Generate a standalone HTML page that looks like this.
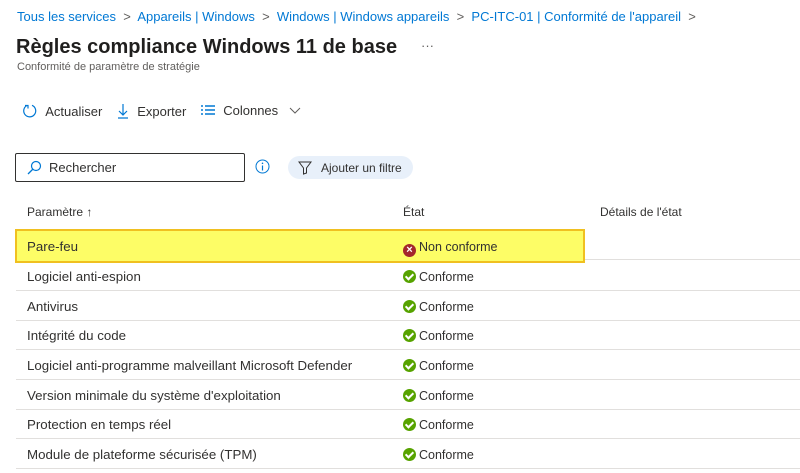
<!DOCTYPE html>
<html><head><meta charset="utf-8"><style>
*{margin:0;padding:0;box-sizing:border-box}
body{width:800px;height:473px;overflow:hidden;background:#fff;font-family:"Liberation Sans",sans-serif;color:#323130;position:relative}
.a{position:absolute;white-space:nowrap}
.bc{top:9px;font-size:13px;color:#0078d4}
.sep{color:#605e5c}
.row{position:absolute;left:16px;width:784px;height:30px;border-bottom:1px solid #e1dfdd}
.row .p{position:absolute;left:11px;top:8px;font-size:13.3px}
.row .s{position:absolute;left:387px;top:9px;font-size:12.5px}
.ok{display:inline-block;width:13px;height:13px;border-radius:50%;background:#57a300;vertical-align:-2px;margin-right:3px;position:relative}
.ok:after{content:"";position:absolute;left:4px;top:2px;width:3px;height:6px;border:solid #fff;border-width:0 2px 2px 0;transform:rotate(45deg)}
.ko{display:inline-block;width:13px;height:13px;border-radius:50%;background:#a4262c;vertical-align:-2px;margin-right:3px;color:#fff;font-size:11px;line-height:13px;text-align:center;font-weight:bold}
</style></head><body>
<div class="a bc" style="left:17px">Tous les services <span class="sep">&nbsp;&gt;&nbsp;</span> Appareils | Windows <span class="sep">&nbsp;&gt;&nbsp;</span> Windows | Windows appareils <span class="sep">&nbsp;&gt;&nbsp;</span> PC-ITC-01 | Conformité de l'appareil <span class="sep">&nbsp;&gt;</span></div>
<div class="a" style="left:16px;top:36px;font-size:20px;font-weight:bold;color:#201f1e">Règles compliance Windows 11 de base</div>
<div class="a" style="left:421px;top:38px;font-size:13px;color:#605e5c">···</div>
<div class="a" style="left:17px;top:61px;font-size:11px;color:#605e5c">Conformité de paramètre de stratégie</div>
<div class="a" style="left:22px;top:103px;font-size:13px">
<svg width="16" height="16" viewBox="0 0 16 16" style="vertical-align:-3px"><path d="M5 2.5A6 6 0 1 0 10 2.3" fill="none" stroke="#0078d4" stroke-width="1.2"/><path d="M3 2.5h3v3" fill="none" stroke="#0078d4" stroke-width="1.2"/></svg>&nbsp;&nbsp;Actualiser</div>
<div class="a" style="left:116px;top:103px;font-size:13px">
<svg width="14" height="16" viewBox="0 0 14 16" style="vertical-align:-3px"><path d="M7 1v11M3 8l4 4 4-4M2 15h10" fill="none" stroke="#0078d4" stroke-width="1.2"/></svg>&nbsp;&nbsp;Exporter</div>
<div class="a" style="left:200px;top:103px;font-size:13px">
<svg width="16" height="14" viewBox="0 0 16 14" style="vertical-align:-2px"><path d="M1 3h2M5 3h10M1 7h2M5 7h10M1 11h2M5 11h10" stroke="#0078d4" stroke-width="1.5"/></svg>&nbsp;&nbsp;Colonnes&nbsp;&nbsp;
<svg width="12" height="8" viewBox="0 0 12 8"><path d="M1 1l5 5 5-5" fill="none" stroke="#605e5c"/></svg></div>
<div class="a" style="left:15px;top:153px;width:230px;height:29px;border:1px solid #323130;border-radius:2px;font-size:13px;padding:6px 0 0 33px">Rechercher
<svg width="16" height="16" viewBox="0 0 16 16" style="position:absolute;left:10px;top:6px"><circle cx="10" cy="6" r="4.5" fill="none" stroke="#0078d4" stroke-width="1.2"/><path d="M7 9l-5 5" stroke="#0078d4" stroke-width="1.3"/></svg></div>
<svg class="a" style="left:255px;top:159px" width="15" height="15" viewBox="0 0 15 15"><circle cx="7.5" cy="7.5" r="6.5" fill="none" stroke="#0078d4"/><path d="M7.5 6.5v5" stroke="#0078d4" stroke-width="1.2"/><circle cx="7.5" cy="4.3" r=".8" fill="#0078d4"/></svg>
<div class="a" style="left:288px;top:156px;width:125px;height:23px;border-radius:12px;background:#e8f0fa;font-size:12px;padding:5px 0 0 33px">Ajouter un filtre
<svg width="14" height="14" viewBox="0 0 14 14" style="position:absolute;left:10px;top:5px"><path d="M1 1h12L8.5 7v5L5.5 13V7z" fill="none" stroke="#323130"/></svg></div>
<div class="a" style="left:27px;top:205px;font-size:12px">Paramètre ↑</div>
<div class="a" style="left:403px;top:205px;font-size:12px">État</div>
<div class="a" style="left:600px;top:205px;font-size:12px">Détails de l'état</div>
<div class="row" style="top:230px;border-bottom:1px solid #e1dfdd"></div>
<div class="a" style="left:15px;top:229px;width:570px;height:34px;background:#fdfd66;border:2px solid #f0c020"></div>
<div class="row" style="top:231px;border:none"><span class="p">Pare-feu</span><span class="s"><span class="ko">×</span>Non conforme</span></div>
<div class="row" style="top:261px"><span class="p">Logiciel anti-espion</span><span class="s"><span class="ok"></span>Conforme</span></div>
<div class="row" style="top:291px"><span class="p">Antivirus</span><span class="s"><span class="ok"></span>Conforme</span></div>
<div class="row" style="top:320px"><span class="p">Intégrité du code</span><span class="s"><span class="ok"></span>Conforme</span></div>
<div class="row" style="top:350px"><span class="p">Logiciel anti-programme malveillant Microsoft Defender</span><span class="s"><span class="ok"></span>Conforme</span></div>
<div class="row" style="top:380px"><span class="p">Version minimale du système d'exploitation</span><span class="s"><span class="ok"></span>Conforme</span></div>
<div class="row" style="top:409px"><span class="p">Protection en temps réel</span><span class="s"><span class="ok"></span>Conforme</span></div>
<div class="row" style="top:439px"><span class="p">Module de plateforme sécurisée (TPM)</span><span class="s"><span class="ok"></span>Conforme</span></div>
</body></html>
